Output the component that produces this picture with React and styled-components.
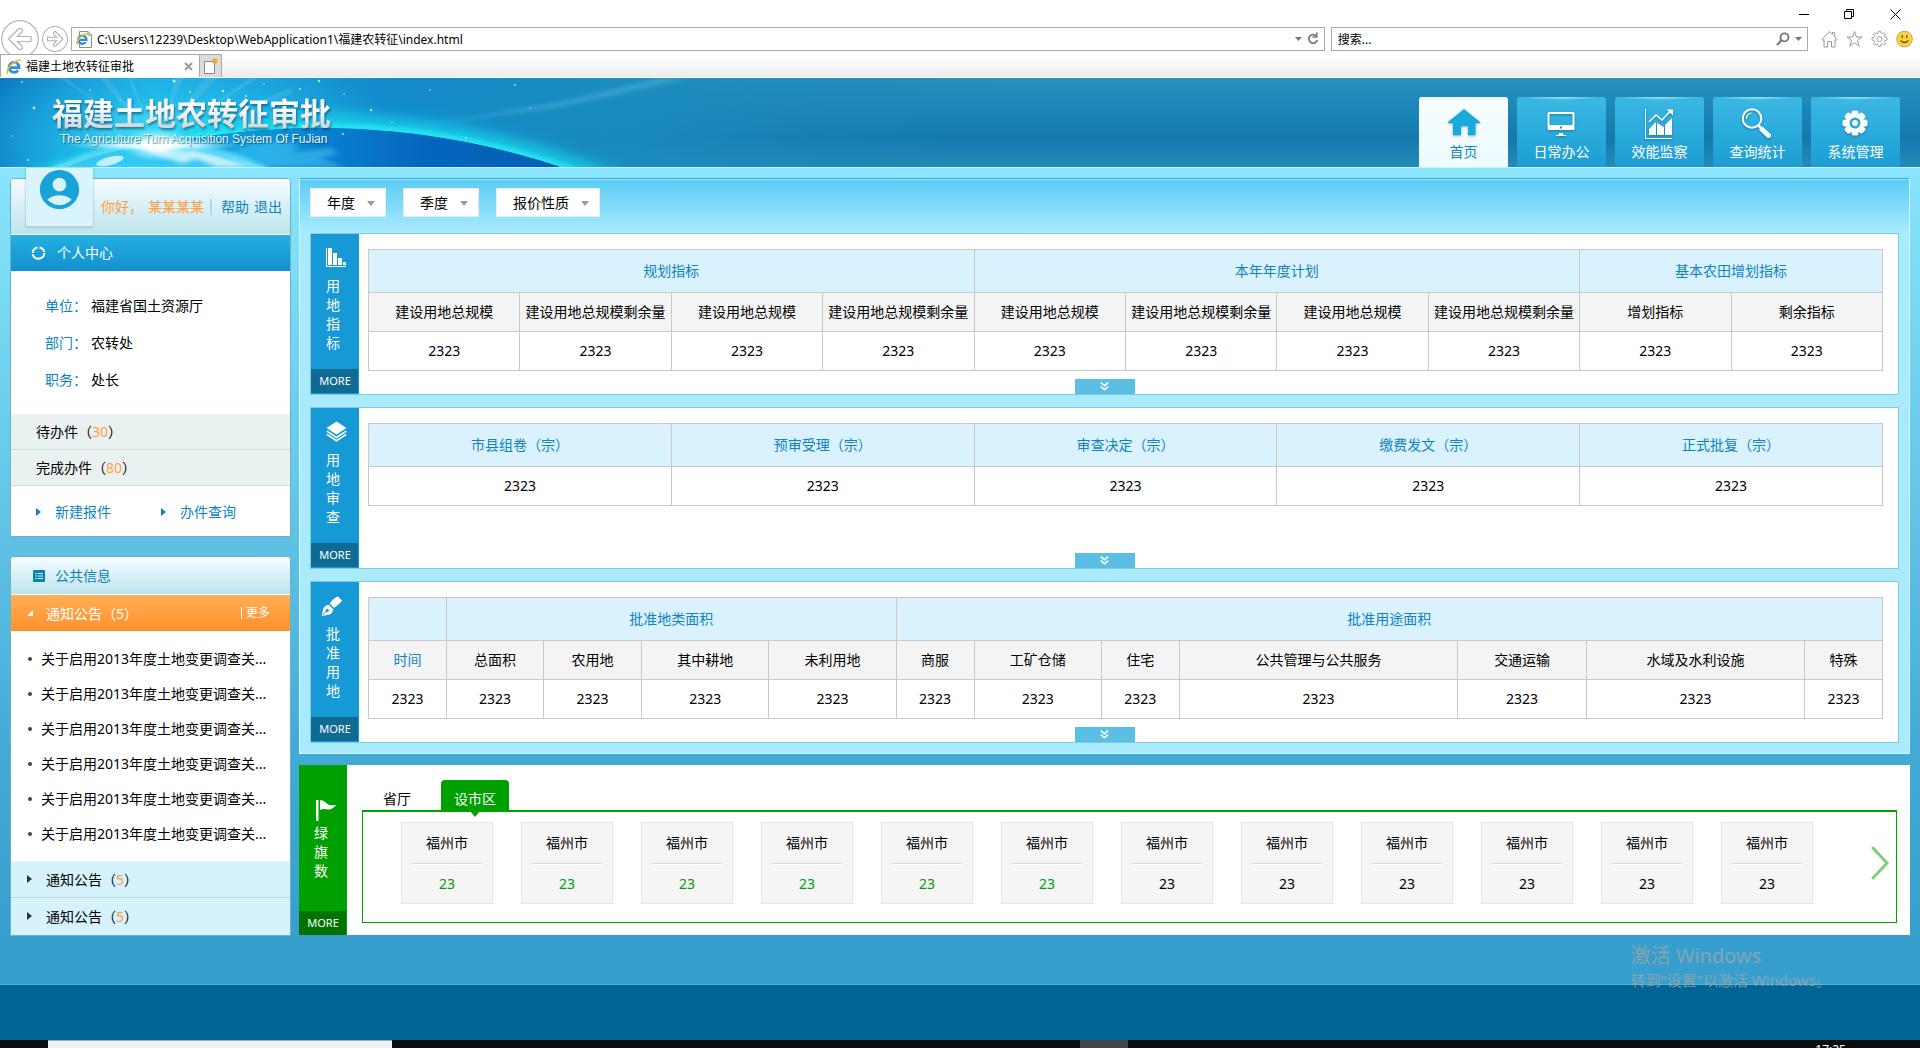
import React, { useState } from 'react';
import styled, { createGlobalStyle } from 'styled-components';
import { MdAccountCircle } from 'react-icons/md';

const GlobalStyle = createGlobalStyle`
  * {
    box-sizing: border-box;
  }

  body {
    margin: 0;
    color: #000;
    font: 14px/20px 'Noto Sans', 'Noto Sans CJK SC', sans-serif;
  }

  ul, h1, h2, p, dl, dd {
    margin: 0;
    padding: 0;
    font-size: inherit;
    font-weight: normal;
    list-style: none;
  }

  a {
    color: inherit;
    text-decoration: none;
  }

  button, input, select {
    font: inherit;
    color: inherit;
    border: 0;
    margin: 0;
    padding: 0;
    background: none;
  }

  svg {
    display: block;
    flex: none;
  }
`;

const Page = styled.div`
  display: flex;
  flex-direction: column;
  min-height: 100vh;
`;

/* ---------- browser window ---------- */

const Chrome = styled.div`
  background: #fff;
  font-size: 12px;
`;

const WindowButtons = styled.div`
  display: flex;
  justify-content: flex-end;
  gap: 33px;
  height: 27px;
  padding: 8px 18px 0 0;

  button {
    width: 13px;
    height: 13px;
  }
`;

const AddressRow = styled.div`
  display: flex;
  align-items: center;
  height: 24px;
  padding: 0 7px 0 1px;
`;

const HistoryButtons = styled.div`
  display: flex;
  align-items: center;
  gap: 3px;
  width: 70px;
`;

const AddressBox = styled.label`
  flex: ${(p) => p.$grow};
  display: flex;
  align-items: center;
  gap: 5px;
  height: 24px;
  padding: 0 5px 0 4px;
  border: 1px solid #aaa;
  background: #fff;

  input {
    flex: 1;
    min-width: 0;
    padding-top: 1px;
    outline: 0;
  }

  & + & {
    margin-left: 6px;
    padding-left: 6px;
  }
`;

const ChromeTools = styled.div`
  display: flex;
  gap: 8px;
  margin-left: 13px;
`;

const TabRow = styled.div`
  display: flex;
  height: 27px;
  padding-top: 3px;
  background: linear-gradient(#fff 5px, #ececec);
  border-bottom: 1px solid #fff;
`;

const BrowserTab = styled.div`
  display: flex;
  align-items: center;
  gap: 4px;
  width: 200px;
  padding: 1px 6px 0 5px;
  border: 1px solid #aaa;
  border-bottom: 0;
  background: #fff;

  button {
    margin-left: auto;
  }
`;

const NewTab = styled.button`
  width: 22px;
  padding-left: 3px;
  border: 1px solid #aaa;
  border-width: 1px 1px 0 0;
  background: #dcdcdc;
`;

/* ---------- header ---------- */

const Header = styled.header`
  position: relative;
  display: flex;
  justify-content: space-between;
  height: 90px;
  overflow: hidden;
  border-bottom: 1px solid #c6f3fd;
  background: linear-gradient(#2692bd, #147aae 68%, #258bb6);
`;

const Sky = styled.svg`
  position: absolute;
  left: 0;
  top: 0;
`;

const Brand = styled.div`
  position: relative;
  padding: 18px 0 0 52px;
  font-family: 'Liberation Sans', 'Noto Sans CJK SC', sans-serif;

  h1 {
    font-size: 31px;
    line-height: 37px;
    font-weight: 700;
    color: transparent;
    background: linear-gradient(#fff 30%, #cfd6da 85%);
    background-clip: text;
    filter: drop-shadow(1px 2px 1px rgba(0, 40, 80, 0.5));
  }

  p {
    padding-left: 8px;
    font-size: 12px;
    line-height: 12px;
    color: #e8f6fb;
    text-shadow: 1px 1px 1px rgba(0, 40, 80, 0.6);
  }
`;

const Nav = styled.nav`
  position: relative;
  display: flex;
  gap: 9px;
  padding: 19px 20px 0 0;
`;

const NavItem = styled.a`
  display: flex;
  flex-direction: column;
  align-items: center;
  width: 89px;
  padding-top: 10px;
  border-radius: 3px 3px 0 0;
  color: ${(p) => (p.$active ? '#0f87bb' : '#fff')};
  background: ${(p) =>
    p.$active
      ? 'linear-gradient(#f6fdff, #eefbff)'
      : 'radial-gradient(ellipse 40px 3px at 50% 0, #a5e3f7, transparent), linear-gradient(#3cb8e2, #29aadb 55%, #1e9cd2)'};

  svg {
    margin-bottom: 3px;
    filter: drop-shadow(0 1px 1px rgba(0, 60, 100, 0.45));
  }
`;

/* ---------- page body ---------- */

const Content = styled.div`
  flex: 1;
  display: flex;
  align-items: flex-start;
  gap: 8px;
  padding: 10px 10px 48px;
  background: linear-gradient(#8ae5fc, #7adaf4 15%, #5fc0e4 47%, #43a9d5 72%, #379fce 95%);
`;

const Sidebar = styled.aside`
  width: 281px;
  flex: none;
`;

const SidePanel = styled.section`
  border: 1px solid #69b3c6;
  border-radius: 4px 4px 0 0;
  background: #fff;

  & + & {
    margin-top: 19px;
  }
`;

const SideHead = styled.div`
  position: relative;
  display: flex;
  align-items: center;
  height: ${(p) => p.$height}px;
  border-radius: 3px 3px 0 0;
  border-bottom: 1px solid #f0fbfd;
  color: #0782b5;
  background: linear-gradient(#f4fcff, #bde4ee);
`;

const Avatar = styled.div`
  position: absolute;
  left: 15px;
  top: -11px;
  display: flex;
  justify-content: center;
  width: 67px;
  height: 59px;
  border-bottom: 1px solid #b4d3dc;
  background: #d9f4fd;
  box-shadow: 0 0 2px rgba(0, 90, 120, 0.4);

  svg {
    margin-top: -2px;
  }
`;

const Greeting = styled.div`
  display: flex;
  align-items: center;
  gap: 5px;
  margin-left: auto;
  padding-right: 8px;
  color: #0f83c0;

  span {
    color: #ff9f3f;
  }

  span:nth-child(2) {
    padding-right: 6px;
    line-height: 16px;
    border-right: 2px solid #a9dcf1;
  }

  a:first-of-type {
    margin-left: 4px;
  }
`;

const BlueBar = styled.h2`
  display: flex;
  align-items: center;
  gap: 11px;
  height: 36px;
  padding-left: 20px;
  color: #fff;
  background: linear-gradient(#26b0e0, #118fcf);
`;

const Info = styled.dl`
  padding: 16px 0 16px 34px;
  line-height: 37px;

  div {
    display: flex;
    gap: 4px;
  }

  dt {
    color: #0f83c0;
  }
`;

const CountRow = styled.a`
  display: block;
  height: 36px;
  padding-left: 25px;
  line-height: 35px;
  border-bottom: 1px solid #d3dcdc;
  background: #eaf1f1;
`;

const Count = styled.span`
  color: #ff9f3f;
`;

const QuickLinks = styled.div`
  display: grid;
  grid-template-columns: 125px 1fr;
  height: 50px;
  padding: 1px 0 0 25px;
  line-height: 50px;
  color: #0f83c0;

  a {
    display: flex;
    align-items: center;
    gap: 14px;
  }
`;

const Triangle = styled.i`
  border: solid transparent;
  border-width: 4px 0 4px 5px;
  border-left-color: ${(p) => p.$color};
`;

const OpenTriangle = styled.i`
  border: solid transparent;
  border-width: 0 0 6px 6px;
  border-bottom-color: #fff;
`;

const NoticeHead = styled.button`
  display: flex;
  align-items: center;
  gap: ${(p) => (p.$open ? 13 : 14)}px;
  width: 100%;
  height: 36px;
  padding-left: 16px;
  color: ${(p) => (p.$open ? '#fff' : '#000')};
  background: ${(p) => (p.$open ? 'linear-gradient(#ffb054, #ff8f2e)' : '#d5f2fd')};

  span {
    line-height: 22px;
    padding-top: 1px;
  }
`;

const NoticeGroup = styled.div`
  position: relative;

  & + & {
    border-bottom: 1px solid #b9dbe3;
  }

  & + &:last-child {
    border-bottom-color: #d5f2fd;
  }
`;

const MoreLink = styled.a`
  position: absolute;
  right: 20px;
  top: 12px;
  padding-left: 4px;
  border-left: 1px solid #fff;
  font-size: 12px;
  line-height: 12px;
  color: #fff;
`;

const NoticeList = styled.ul`
  padding: 10px 16px 10px 17px;
  line-height: 35px;

  li {
    display: flex;
    align-items: center;
    gap: 9px;
    white-space: nowrap;
  }

  li::before {
    content: '';
    width: 4px;
    height: 4px;
    border-radius: 50%;
    background: #444;
  }
`;

const Main = styled.main`
  flex: 1;
  min-width: 0;
`;

const Dashboard = styled.div`
  padding: 9px 10px 10px;
  border: 1px solid #d3f7fe;
  border-top-color: #35aadb;
  background: linear-gradient(#5bcbf4, #a9ebfd 54px);
  box-shadow: inset 0 1px #98e6fb;
`;

const Filters = styled.div`
  display: flex;
  gap: 17px;
  margin-bottom: 16px;
`;

const SelectBox = styled.label`
  position: relative;
  border: 1px solid #e2eef2;
  background: #fff;

  select {
    appearance: none;
    display: block;
    height: 27px;
    padding: 0 30px 0 16px;
    outline: 0;
  }

  &::after {
    content: '';
    position: absolute;
    right: 10px;
    top: 12px;
    border: solid transparent;
    border-width: 5px 4px 0;
    border-top-color: #999;
    pointer-events: none;
  }
`;

const Card = styled.section`
  position: relative;
  display: flex;
  min-height: 162px;
  border: 1px solid #80cade;
  background: #fff;

  & + & {
    margin-top: 12px;
  }
`;

const CardSide = styled.div`
  display: flex;
  flex-direction: column;
  width: 48px;
  padding-top: ${(p) => (p.$green ? 35 : 13)}px;
  color: #fff;
  background: ${(p) => (p.$green ? '#00a000' : '#1799d5')};

  svg {
    margin-left: 15px;
    overflow: visible;
  }

  h2 {
    width: 14px;
    margin: ${(p) => (p.$green ? 2 : 8)}px 0 0 15px;
    line-height: 19px;
  }
`;

const CardMore = styled.a`
  margin-top: auto;
  margin-right: 1px;
  margin-bottom: ${(p) => (p.$green ? 0 : 1)}px;
  padding-left: 1px;
  font-size: 11px;
  line-height: 24px;
  text-align: center;
  background: ${(p) => (p.$green ? '#007200' : '#0f6a94')};
`;

const CardBody = styled.div`
  flex: 1;
  min-width: 0;
  padding: 15px 15px 0 9px;
`;

const Expand = styled.button`
  position: absolute;
  left: calc(50% - 30px);
  bottom: 0;
  display: flex;
  justify-content: center;
  align-items: center;
  width: 60px;
  height: 15px;
  background: #5bbfe5;
`;

const Table = styled.table`
  width: 100%;
  table-layout: fixed;
  border-collapse: collapse;
  text-align: center;
  white-space: nowrap;

  th, td {
    height: 39px;
    padding: 0;
    border: 1px solid #c8c8c8;
    font-weight: normal;
  }

  th {
    background: #f4f4f4;
  }

  thead tr:first-child th {
    height: 43px;
    color: #0f83c0;
    background: #d9f2fd;
  }
`;

const TimeTh = styled.th`
  color: #0f83c0;
`;

const FlagPanel = styled.section`
  display: flex;
  height: 170px;
  margin-top: 11px;
  background: #fff;
`;

const FlagBody = styled.div`
  flex: 1;
  min-width: 0;
  padding: 15px 13px 0 15px;
`;

const FlagTabs = styled.div`
  display: flex;
  height: 30px;
`;

const FlagTab = styled.button`
  position: relative;
  height: 30px;
  margin-right: 9px;
  padding: 8px ${(p) => (p.$active ? 13 : 21)}px 0;
  border-radius: 4px 4px 0 0;
  color: ${(p) => (p.$active ? '#fff' : '#000')};
  background: ${(p) => (p.$active ? '#00a000' : 'none')};

  &::after {
    content: '';
    display: ${(p) => (p.$active ? 'block' : 'none')};
    position: absolute;
    left: calc(50% - 5px);
    top: 31px;
    border: solid transparent;
    border-width: 6px 5px 0;
    border-top-color: #00a000;
  }
`;

const CityStrip = styled.div`
  display: flex;
  align-items: center;
  justify-content: space-between;
  height: 113px;
  padding: 0 7px 8px 38px;
  border: 1px solid #00a000;
  border-top-width: 2px;

  ul {
    display: flex;
    gap: 28px;
  }
`;

const City = styled.li`
  width: 92px;
  height: 82px;
  padding: 0 10px;
  border: 1px solid #e6e6e6;
  background: #f5f5f5;
  text-align: center;
  line-height: 40px;

  p:last-child {
    border-top: 1px solid #d8d8d8;
    box-shadow: inset 0 1px #fff;
    color: ${(p) => (p.$green ? '#00a000' : '#000')};
  }
`;

const Footer = styled.footer`
  height: 56px;
  border-top: 1px solid #4fb4de;
  background: #006494;
`;

const Taskbar = styled.div`
  display: flex;
  height: 8px;
  overflow: hidden;
  background: #0d0d0d;
  color: #fff;
  font-size: 12px;
  line-height: 14px;
`;

const TaskSearch = styled.div`
  width: 344px;
  margin-left: 48px;
  border-top: 1px solid #aaa;
  background: #f2f2f2;
`;

const TaskActive = styled.div`
  width: 48px;
  margin-left: 688px;
  background: #444;
`;

const Clock = styled.time`
  margin: 3px 74px 0 auto;
`;

const Watermark = styled.div`
  position: fixed;
  right: 95px;
  bottom: 57px;
  width: 194px;
  color: rgba(165, 165, 165, 0.75);
  font-size: 15px;
  line-height: 22px;
  white-space: nowrap;
  pointer-events: none;

  p:first-child {
    font-size: 20px;
    line-height: 26px;
  }
`;

/* ---------- icons ---------- */

const IeIcon = ({ size = 16 }) => (
  <svg width={size} height={size} viewBox="0 0 16 16" fill="none">
    <path d="M3.6 8.6H13A5 5 0 1 0 12 11.4" stroke="#2b8fd9" strokeWidth="2.8" />
    <path d="M4.2 7.4A4.2 4.2 0 0 1 11 5.4" stroke="#7fd0f5" strokeWidth="1" />
    <path d="M2 14.6C-.5 13 3 6.500 8 3.300 11.500 1 14.800.2 14.800 2.500" stroke="#f3bd1d" strokeWidth="1.500" />
  </svg>
);

const FileIeIcon = () => (
  <svg width="16" height="17" viewBox="0 0 16 17" fill="none">
    <path d="M3.500.5H12l3.500 3.500V16.500H3.500z" fill="#fff" stroke="#8c8c8c" />
    <path d="M12 .5V4h3.500" stroke="#8c8c8c" />
    <g transform="translate(0 2) scale(.8)">
      <path d="M3.600 8.600H13A5 5 0 1 0 12 11.400" stroke="#2b8fd9" strokeWidth="3" />
      <path d="M2 14.600C-.5 13 3 6.500 8 3.300 11.500 1 14.800.2 14.800 2.500" stroke="#f3bd1d" strokeWidth="1.800" />
    </g>
  </svg>
);

const HistoryIcon = ({ size, back }) => (
  <svg width={size} height={size} viewBox="0 0 38 38" fill="none" stroke="#b4b4b4">
    <circle cx="19" cy="19" r="18.300" fill="#fff" strokeWidth={back ? 1.200 : 1.700} />
    <path
      transform={back ? undefined : 'matrix(-1 0 0 1 38 0)'}
      strokeWidth={back ? 1.200 : 1.700}
      d="M7.500 19 17 9.500a2 2 0 0 1 4 2.500L16.500 16.500H30v5H16.500L21 26a2 2 0 0 1-4 2.500z"
    />
  </svg>
);

const DownIcon = () => (
  <svg width="7" height="4" viewBox="0 0 7 4">
    <path d="M0 0h7L3.500 4z" fill="#777" />
  </svg>
);

const RefreshIcon = () => (
  <svg width="12" height="14" viewBox="0 0 12 14" fill="none" stroke="#777" strokeWidth="1.800">
    <path d="M9.500 4.200A4.300 4.300 0 1 0 10.300 8" />
    <path d="M9.800.5V5H5.500" strokeWidth="1.500" />
  </svg>
);

const SmallSearchIcon = () => (
  <svg width="14" height="14" viewBox="0 0 14 14" fill="none" stroke="#777" strokeWidth="1.800">
    <circle cx="8.500" cy="5.300" r="4" />
    <path d="M5.500 8.300 1 13" strokeWidth="2.200" />
  </svg>
);

const gearPath =
  'M10.500 1h3l.5 2.800 1.900.8L18.300 3l2.200 2.200-1.600 2.400.8 1.900 2.800.5v3.500l-2.800.5-.8 1.900 1.600 2.400-2.200 2.200-2.400-1.600-1.900.8-.5 2.800h-3l-.5-2.800-1.900-.8L5.700 20.500l-2.200-2.200 1.600-2.400-.8-1.900-2.800-.5V10l2.800-.5.8-1.900-1.600-2.400L5.700 3l2.400 1.600 1.900-.8z';

const ToolIcons = () => (
  <ChromeTools>
    <svg width="17" height="18" viewBox="0 0 17 18" fill="none" stroke="#999">
      <path d="M.8 9.500 8.500 1.500l3 3v-2h2.200v4.500L16.200 9.500l-1 1-1.200-1V17h-3.500v-5.500h-4V17H3V9.500l-1.200 1z" />
    </svg>
    <svg width="17" height="18" viewBox="0 0 17 18" fill="none" stroke="#999">
      <path d="M8.500 1.500l1.900 5.500h5.600l-4.500 3.500 1.700 5.700-4.700-3.500-4.700 3.500 1.700-5.700L1 7h5.600z" />
    </svg>
    <svg width="17" height="18" viewBox="0 0 24 24" fill="none" stroke="#999" strokeWidth="1.300">
      <path d={gearPath} />
      <circle cx="12" cy="12" r="3.500" />
    </svg>
    <svg width="17" height="18" viewBox="0 0 17 18">
      <circle cx="8.500" cy="9" r="7.800" fill="#fbd33c" stroke="#cba233" />
      <path d="M6.200 5v3M10.800 5v3M4.500 10.500q4 4 8 0" fill="none" stroke="#6b5213" strokeWidth="1.300" />
    </svg>
  </ChromeTools>
);

const HomeIcon = () => (
  <svg width="32" height="32" viewBox="0 0 32 32" fill="#18aadb">
    <path d="M16 2 32 15v1h-4.500v12H20v-9h-7v9H5V16H0v-1z" />
  </svg>
);

const MonitorIcon = () => (
  <svg width="32" height="32" viewBox="1 0 32 32" fill="#fff">
    <path
      fillRule="evenodd"
      d="M4 5h24a1.500 1.500 0 0 1 1.500 1.500v15A1.500 1.500 0 0 1 28 23H4a1.500 1.500 0 0 1-1.500-1.500v-15A1.500 1.500 0 0 1 4 5zm.5 2v11h23V7zM15 19.500h2v2h-2z"
    />
    <path d="M14 26h4v1.500l3.500 1V29h-11v-.500l3.500-1z" />
  </svg>
);

const ChartIcon = () => (
  <svg width="32" height="32" viewBox="1 0 32 32" fill="#fff">
    <path d="M2 2h1v29h26v1H2z" />
    <path d="M6 22l7-7v13H6zM14 16l7 4v8h-7zM22 18l7-7v17h-7z" />
    <path d="M6 15l7-7 6 5L27 4.500" fill="none" stroke="#fff" strokeWidth="1.600" />
    <path d="M23.500 2.500H30V8.500z" />
  </svg>
);

const SearchIcon = () => (
  <svg width="32" height="32" viewBox="2 1 32 32" fill="none" stroke="#fff">
    <circle cx="12" cy="12.500" r="9.300" strokeWidth="2" />
    <path d="M6.500 13a5.500 5.500 0 0 1 5-6" strokeWidth="1.200" />
    <path d="M18.500 19.500l3 3" strokeWidth="2.500" />
    <path d="M22 23.500l6.500 6" strokeWidth="5" strokeLinecap="round" />
  </svg>
);

const GearIcon = () => (
  <svg width="32" height="32" viewBox="1 1 32 32" fill="#fff">
    {[0, 45, 90, 135].map((deg) => (
      <rect key={deg} x="12.500" y="4.500" width="7" height="25" rx="2" transform={`rotate(${deg} 16 17)`} />
    ))}
    <circle cx="16" cy="17" r="9" />
    <circle cx="16" cy="17" r="4.200" fill="none" stroke="#2aa9da" strokeWidth="2.600" />
  </svg>
);

const RingIcon = () => (
  <svg width="15" height="15" viewBox="0 0 15 15" fill="none" stroke="#fff" strokeWidth="2">
    <path d="M8.500 1.600A6 6 0 0 1 13.300 6M13.400 7A6 6 0 0 1 1.600 8.200M1.700 6.800A6 6 0 0 1 6.500 1.600" />
  </svg>
);

const ListIcon = () => (
  <svg width="12" height="12" viewBox="0 0 12 12">
    <rect width="12" height="12" rx="1" fill="#0782b5" />
    <path d="M2 3.500h1.500M4.500 3.500H10M2 6h1.500M4.500 6H10M2 8.500h1.500M4.500 8.500H10" stroke="#e6f7fc" />
  </svg>
);

const BarsIcon = () => (
  <svg width="21" height="21" viewBox="0 0 21 21" fill="#fff">
    <path d="M0 1h1v18h19v1H0zM2 1h4v17H2zM7 6h4v12H7zM12 11h4v7h-4zM17 15h3v3h-3z" />
  </svg>
);

const LayersIcon = () => (
  <svg width="21" height="21" viewBox="0 0 21 21" fill="none" stroke="#fff" strokeWidth="1.600">
    <path d="M10.500.5 20.500 7l-10 6.500L.5 7z" fill="#fff" stroke="none" />
    <path d="M.8 10.200 10.500 16.500l9.700-6.300M.8 13.400l9.700 6.300 9.700-6.300" />
  </svg>
);

const PenIcon = () => (
  <svg width="21" height="21" viewBox="0 0 21 21" fill="#fff">
    <g transform="translate(-6 0)">
      <path d="M18 1.500l4 4q0 .8-6 6l-2.200 1.300-4-4 1.300-2.300q5-5 6.900-5z" />
      <path
        fillRule="evenodd"
        d="M8.800 9.800l4.600 4.600c-.8 3-2.400 4.600-5 5.400L2.500 21 1.800 20.200 3 14.500c.8-2.500 2.800-4.200 5.800-4.700zM3.300 20l3.200-3.200a1.600 1.600 0 1 0-.6-.6L2.700 19.400z"
      />
    </g>
  </svg>
);

const FlagIcon = () => (
  <svg width="23" height="21" viewBox="0 0 23 21" fill="#fff">
    <path d="M2 0h2.500v21H2zM6 .5c4-1 6 3.500 9.500 4.500 2 .5 4 .3 6.500 0-2 2.500-4 4.300-6.500 4.500C12 10 9.500 8 6 10z" />
  </svg>
);

const DoubleDown = () => (
  <svg width="9" height="9" viewBox="0 0 9 9" fill="none" stroke="#fff" strokeWidth="1.500">
    <path d="M.8.7 4.500 3.700 8.200.7M.8 4.700l3.700 3 3.700-3" />
  </svg>
);

const stars = [
  [22, 4, 1], [34, 30, 1.400], [90, 12, 0.800], [120, 22, 0.700], [174, 3, 1.600], [190, 14, 1],
  [223, 13, 1.200], [246, 18, 1], [264, 6, 0.700], [300, 11, 1], [319, 3, 1.200], [344, 16, 0.800],
  [371, 32, 1.200], [343, 56, 1], [28, 82, 1], [392, 44, 0.700], [430, 12, 0.800], [515, 7, 1],
  [466, 60, 0.800], [12, 58, 0.700], [530, 30, 0.700], [60, 46, 0.800], [288, 34, 0.700],
];

const SkyArt = () => (
  <Sky width="1000" height="89" viewBox="0 0 1000 89">
    <defs>
      <linearGradient id="base">
        <stop offset="0" stopColor="#0a76bd" />
        <stop offset=".15" stopColor="#1ba4de" />
        <stop offset=".4" stopColor="#128bcb" />
        <stop offset=".62" stopColor="#1a8cc0" stopOpacity=".8" />
        <stop offset="1" stopColor="#1a83b5" stopOpacity="0" />
      </linearGradient>
      <radialGradient id="halo">
        <stop offset="0" stopColor="#5cecfd" />
        <stop offset=".45" stopColor="#27c8f0" stopOpacity=".6" />
        <stop offset="1" stopColor="#25c0ee" stopOpacity="0" />
      </radialGradient>
      <radialGradient id="sun">
        <stop offset="0" stopColor="#fff" />
        <stop offset=".35" stopColor="#fff" stopOpacity=".9" />
        <stop offset="1" stopColor="#7feeff" stopOpacity="0" />
      </radialGradient>
      <linearGradient id="planet">
        <stop offset="0" stopColor="#16c4f0" />
        <stop offset=".35" stopColor="#0a92da" />
        <stop offset=".6" stopColor="#0566be" />
        <stop offset="1" stopColor="#0458ad" />
      </linearGradient>
      <linearGradient id="moon" x2="0" y2="1">
        <stop offset="0" stopColor="#3fd8f8" />
        <stop offset="1" stopColor="#1d9fdf" />
      </linearGradient>
      <filter id="soft" x="-20%" y="-20%" width="140%" height="140%">
        <feGaussianBlur stdDeviation="8" />
      </filter>
      <filter id="softer" x="-20%" y="-20%" width="140%" height="140%">
        <feGaussianBlur stdDeviation="2" />
      </filter>
      <clipPath id="disc">
        <circle cx="320" cy="807" r="757" />
      </clipPath>
      <clipPath id="near">
        <rect width="300" height="89" />
      </clipPath>
    </defs>
    <rect width="1000" height="89" fill="url(#base)" />
    <ellipse cx="165" cy="62" rx="230" ry="95" fill="url(#halo)" />
    <g fill="#fff" opacity=".09">
      <path d="M155 66 100 0h8zM155 66 128 0h4zM155 66 176 0h7zM155 66 205 0h12zM155 66 250 0h8zM155 66 60 0h6zM155 66 290 10l4 5z" />
    </g>
    <path d="M400 51 560 24 660 0 690 0 560 29z" fill="#6fd2e8" opacity=".3" filter="url(#softer)" />
    <circle cx="320" cy="807" r="758" fill="none" stroke="#12d4ec" strokeWidth="22" filter="url(#soft)" />
    <circle cx="320" cy="807" r="758" fill="none" stroke="#2be8f2" strokeWidth="5" filter="url(#softer)" />
    <circle cx="320" cy="807" r="757" fill="#0458ad" />
    <g clipPath="url(#disc)">
      <rect y="40" width="600" height="49" fill="url(#planet)" x="60" />
      <path d="M215 89C230 66 280 56 300 68l-10 6 40-4 10 6-20 4 25 9z" fill="#56d4f6" opacity=".45" filter="url(#softer)" />
    </g>
    <g clipPath="url(#near)">
      <circle cx="160" cy="293" r="226" fill="none" stroke="#7ff2ff" strokeWidth="7" filter="url(#softer)" />
      <circle cx="160" cy="293" r="224" fill="url(#moon)" />
      <rect y="68" x="60" width="200" height="21" fill="#1db0e8" opacity=".35" filter="url(#softer)" />
      <path d="M150 74l45-2 62 17h-40l-20-8-15 4-20-6z" fill="#e6fbff" opacity=".8" filter="url(#softer)" />
    </g>
    <ellipse cx="110" cy="83" rx="14" ry="4" fill="#d9f6ff" opacity=".85" transform="rotate(-14 110 83)" />
    <ellipse cx="155" cy="67" rx="90" ry="6" fill="url(#sun)" />
    <ellipse cx="158" cy="67" rx="38" ry="17" fill="url(#sun)" />
    <g fill="#fff" opacity=".7">
      {stars.map(([x, y, r]) => (
        <circle key={x} cx={x} cy={y} r={r} />
      ))}
    </g>
  </Sky>
);

/* ---------- data ---------- */

const navItems = [
  ['首页', HomeIcon],
  ['日常办公', MonitorIcon],
  ['效能监察', ChartIcon],
  ['查询统计', SearchIcon],
  ['系统管理', GearIcon],
];

const info = [
  ['单位：', '福建省国土资源厅'],
  ['部门：', '农转处'],
  ['职务：', '处长'],
];

const planCols = [
  '建设用地总规模', '建设用地总规模剩余量', '建设用地总规模', '建设用地总规模剩余量',
  '建设用地总规模', '建设用地总规模剩余量', '建设用地总规模', '建设用地总规模剩余量',
  '增划指标', '剩余指标',
];

const reviewCols = ['市县组卷（宗）', '预审受理（宗）', '审查决定（宗）', '缴费发文（宗）', '正式批复（宗）'];

// column name, share of the table width in percent
const approvalCols = [
  ['时间', 5.15], ['总面积', 6.4], ['农用地', 6.5], ['其中耕地', 8.4], ['未利用地', 8.4], ['商服', 5.15],
  ['工矿仓储', 8.4], ['住宅', 5.15], ['公共管理与公共服务', 18.4], ['交通运输', 8.5],
  ['水域及水利设施', 14.4], ['特殊', 5.15],
];

/* ---------- parts ---------- */

const Filter = ({ label }) => (
  <SelectBox>
    <select aria-label={label}>
      <option>{label}</option>
    </select>
  </SelectBox>
);

const IndexCard = ({ icon, title, children }) => (
  <Card>
    <CardSide>
      {icon}
      <h2>{title}</h2>
      <CardMore href="#">MORE</CardMore>
    </CardSide>
    <CardBody>{children}</CardBody>
    <Expand aria-label="展开">
      <DoubleDown />
    </Expand>
  </Card>
);

const ValueRow = ({ count }) => (
  <tbody>
    <tr>
      {Array.from({ length: count }, (_, i) => (
        <td key={i}>2323</td>
      ))}
    </tr>
  </tbody>
);

const Browser = () => (
  <Chrome>
    <WindowButtons>
      <button aria-label="最小化">
        <svg width="13" height="13" stroke="#000"><path d="M2 6.500h10" /></svg>
      </button>
      <button aria-label="还原">
        <svg width="13" height="13" fill="none" stroke="#000">
          <path d="M1.500 3.500h7v7h-7zM3.500 3V1.500h7v7H9" />
        </svg>
      </button>
      <button aria-label="关闭">
        <svg width="13" height="13" stroke="#000"><path d="M1.500 1.500l10 10M11.500 1.500l-10 10" /></svg>
      </button>
    </WindowButtons>
    <AddressRow>
      <HistoryButtons>
        <button aria-label="后退"><HistoryIcon size={38} back /></button>
        <button aria-label="前进"><HistoryIcon size={26} /></button>
      </HistoryButtons>
      <AddressBox $grow="1245">
        <FileIeIcon />
        <input aria-label="地址" defaultValue={'C:\\Users\\12239\\Desktop\\WebApplication1\\福建农转征\\index.html'} />
        <DownIcon />
        <RefreshIcon />
      </AddressBox>
      <AddressBox $grow="465">
        <input aria-label="搜索" defaultValue="搜索..." />
        <SmallSearchIcon />
        <DownIcon />
      </AddressBox>
      <ToolIcons />
    </AddressRow>
    <TabRow>
      <BrowserTab>
        <IeIcon />
        福建土地农转征审批
        <button aria-label="关闭标签页">
          <svg width="9" height="9" stroke="#999" strokeWidth="2"><path d="M1 1l7 7M8 1L1 8" /></svg>
        </button>
      </BrowserTab>
      <NewTab aria-label="新标签页">
        <svg width="16" height="18" viewBox="0 0 16 18">
          <path d="M1.500 4.500h10v12h-10z" fill="#fff" stroke="#888" />
          <path d="M12 1v6M9 4h6M9.800 1.800l4.400 4.400M14.200 1.800L9.800 6.200" stroke="#f5a623" strokeWidth="1.200" />
        </svg>
      </NewTab>
    </TabRow>
  </Chrome>
);

const UserPanel = () => (
  <SidePanel>
    <SideHead $height={56}>
      <Avatar>
        <MdAccountCircle size={47} color="#18a3d9" />
      </Avatar>
      <Greeting>
        <span>你好，</span>
        <span>某某某某</span>
        <a href="#">帮助</a>
        <a href="#">退出</a>
      </Greeting>
    </SideHead>
    <BlueBar>
      <RingIcon />
      个人中心
    </BlueBar>
    <Info>
      {info.map(([name, value]) => (
        <div key={name}>
          <dt>{name}</dt>
          <dd>{value}</dd>
        </div>
      ))}
    </Info>
    <CountRow href="#">待办件（<Count>30</Count>）</CountRow>
    <CountRow href="#">完成办件（<Count>80</Count>）</CountRow>
    <QuickLinks>
      <a href="#"><Triangle $color="#0f83b5" />新建报件</a>
      <a href="#"><Triangle $color="#0f83b5" />办件查询</a>
    </QuickLinks>
  </SidePanel>
);

const PublicHead = styled(SideHead)`
  gap: 10px;
  padding-left: 22px;
`;

const NoticePanel = () => {
  const [open, setOpen] = useState(0);

  return (
    <SidePanel>
      <PublicHead $height={38}>
        <ListIcon />
        公共信息
      </PublicHead>
      {[0, 1, 2].map((i) => (
        <NoticeGroup key={i}>
          <NoticeHead $open={open === i} onClick={() => setOpen(i)}>
            {open === i ? <OpenTriangle /> : <Triangle $color="#333" />}
            <span>通知公告（{open === i ? '5' : <Count>5</Count>}）</span>
          </NoticeHead>
          {open === i && <MoreLink href="#">更多</MoreLink>}
          {open === i && (
            <NoticeList>
              {Array.from({ length: 6 }, (_, n) => (
                <li key={n}><a href="#">关于启用2013年度土地变更调查关...</a></li>
              ))}
            </NoticeList>
          )}
        </NoticeGroup>
      ))}
    </SidePanel>
  );
};

const Flags = () => {
  const [tab, setTab] = useState('设市区');

  return (
    <FlagPanel>
      <CardSide $green>
        <FlagIcon />
        <h2>绿旗数</h2>
        <CardMore $green href="#">MORE</CardMore>
      </CardSide>
      <FlagBody>
        <FlagTabs>
          {['省厅', '设市区'].map((name) => (
            <FlagTab key={name} $active={tab === name} onClick={() => setTab(name)}>
              {name}
            </FlagTab>
          ))}
        </FlagTabs>
        <CityStrip>
          <ul>
            {Array.from({ length: 12 }, (_, i) => (
              <City key={i} $green={i < 6}>
                <p>福州市</p>
                <p>23</p>
              </City>
            ))}
          </ul>
          <button aria-label="下一页">
            <svg width="18" height="34" fill="none" stroke="#7dcf7d" strokeWidth="3" strokeLinecap="round">
              <path d="M2 2l14 15L2 32" />
            </svg>
          </button>
        </CityStrip>
      </FlagBody>
    </FlagPanel>
  );
};

const App = () => (
  <Page>
    <GlobalStyle />
    <Browser />
    <Header>
      <SkyArt />
      <Brand>
        <h1>福建土地农转征审批</h1>
        <p>The Agriculture Turn Acquisition System Of FuJian</p>
      </Brand>
      <Nav>
        {navItems.map(([name, Icon], i) => (
          <NavItem key={name} href="#" $active={i === 0}>
            <Icon />
            {name}
          </NavItem>
        ))}
      </Nav>
    </Header>
    <Content>
      <Sidebar>
        <UserPanel />
        <NoticePanel />
      </Sidebar>
      <Main>
        <Dashboard>
          <Filters>
            <Filter label="年度" />
            <Filter label="季度" />
            <Filter label="报价性质" />
          </Filters>
          <IndexCard icon={<BarsIcon />} title="用地指标">
            <Table>
              <colgroup>
                {planCols.map((_, i) => <col key={i} />)}
              </colgroup>
              <thead>
                <tr>
                  <th colSpan="4">规划指标</th>
                  <th colSpan="4">本年年度计划</th>
                  <th colSpan="2">基本农田增划指标</th>
                </tr>
                <tr>
                  {planCols.map((name, i) => <th key={i}>{name}</th>)}
                </tr>
              </thead>
              <ValueRow count={planCols.length} />
            </Table>
          </IndexCard>
          <IndexCard icon={<LayersIcon />} title="用地审查">
            <Table>
              <thead>
                <tr>
                  {reviewCols.map((name) => <th key={name}>{name}</th>)}
                </tr>
              </thead>
              <ValueRow count={reviewCols.length} />
            </Table>
          </IndexCard>
          <IndexCard icon={<PenIcon />} title="批准用地">
            <Table>
              <colgroup>
                {approvalCols.map(([name, share]) => <col key={name} style={{ width: `${share}%` }} />)}
              </colgroup>
              <thead>
                <tr>
                  <th />
                  <th colSpan="4">批准地类面积</th>
                  <th colSpan="7">批准用途面积</th>
                </tr>
                <tr>
                  {approvalCols.map(([name], i) =>
                    i === 0 ? <TimeTh key={name}>{name}</TimeTh> : <th key={name}>{name}</th>
                  )}
                </tr>
              </thead>
              <ValueRow count={approvalCols.length} />
            </Table>
          </IndexCard>
        </Dashboard>
        <Flags />
      </Main>
    </Content>
    <Footer />
    <Taskbar>
      <TaskSearch />
      <TaskActive />
      <Clock>17:25</Clock>
    </Taskbar>
    <Watermark>
      <p>激活 Windows</p>
      <p>转到"设置"以激活 Windows。</p>
    </Watermark>
  </Page>
);

export default App;
